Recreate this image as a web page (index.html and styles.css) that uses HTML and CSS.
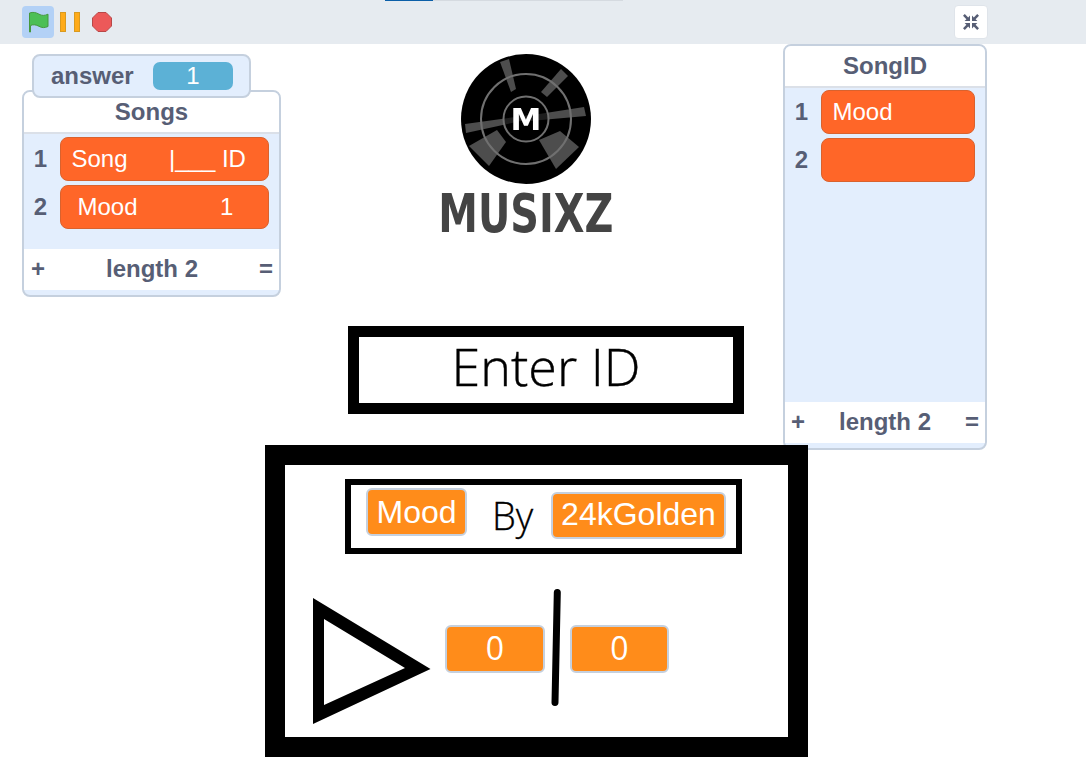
FILE: index.html
```html
<!DOCTYPE html>
<html lang="en">
<head>
<meta charset="utf-8">
<title>Musixz</title>
<link rel="stylesheet" href="styles.css">
</head>
<body>
<header class="toolbar">
  <div class="progress"><span class="progress-fill"></span></div>
  <div class="controls">
    <button class="flag-btn" aria-label="Go">
      <svg width="22" height="22" viewBox="0 0 22 22"><path d="M2.500 21V2C6 .8 9 1.400 12 3.200 15 4.800 17.500 4.800 21 3.200V15.500C17.500 17 15 17 12 15.300 9 13.600 6 13.300 3.500 14.500V21Z" fill="#4cbf56" stroke="#45993d" stroke-width="1"/></svg>
    </button>
    <span class="pause"><i></i><i></i></span>
    <svg class="stop" width="20" height="20" viewBox="0 0 20 20"><path d="M6 .5H14L19.500 6V14L14 19.500H6L.5 14V6Z" fill="#ec5959" stroke="#b84848"/></svg>
  </div>
  <button class="full-btn" aria-label="Exit full screen">
    <svg width="16" height="16" viewBox="0 0 16 16" fill="#575e75"><path d="M1.800 0 5.200 3.400 7 1.600V7H1.600L3.400 5.200 0 1.800Z"/><path d="M14.200 0 10.800 3.400 9 1.600V7H14.400L12.600 5.200 16 1.800Z"/><path d="M1.800 16 5.200 12.600 7 14.400V9H1.600L3.400 10.800 0 14.200Z"/><path d="M14.200 16 10.800 12.600 9 14.400V9H14.400L12.600 10.800 16 14.200Z"/></svg>
  </button>
</header>
<main class="stage">
  <section class="monitor list songs">
    <h2 class="list-title">Songs</h2>
    <ol class="list-body">
      <li class="row"><span class="idx">1</span><span class="cell"><span class="cell-a">Song</span><span class="cell-b">|___ ID</span></span></li>
      <li class="row"><span class="idx">2</span><span class="cell"><span class="cell-c">Mood</span><span class="cell-d">1</span></span></li>
    </ol>
    <div class="list-foot"><span>+</span><span class="len">length 2</span><span>=</span></div>
  </section>
  <section class="monitor answer"><span class="answer-label">answer</span><span class="answer-value">1</span></section>
  <section class="monitor list songid">
    <h2 class="list-title">SongID</h2>
    <ol class="list-body">
      <li class="row"><span class="idx">1</span><span class="cell">Mood</span></li>
      <li class="row"><span class="idx">2</span><span class="cell"></span></li>
    </ol>
    <div class="list-foot"><span>+</span><span class="len">length 2</span><span>=</span></div>
  </section>

  <div class="logo">
    <svg class="logo-disc" width="132" height="132" viewBox="0 0 132 132">
      <circle cx="66" cy="66" r="65" fill="#000"/>
      <g fill="#4d4d4d">
        <path d="M40 9 49 6 56 36 51 39Z"/>
        <path d="M101 16 108 23 87 44 81 39Z"/>
        <path d="M5 71 70 62 70 66 6 80Z"/>
        <path d="M60 64 124 54 126 63 70 68Z"/>
        <path d="M9 93 37 77 46 89 29 113Z"/>
        <path d="M79 87 100 78 119 94 96 116Z"/>
      </g>
      <circle cx="66" cy="66" r="45" fill="none" stroke="#707070" stroke-width="2"/>
      <circle cx="66" cy="66" r="22.500" fill="#000" fill-opacity=".6" stroke="#707070" stroke-width="2"/>
      <text class="logo-m" x="66" y="77">M</text>
    </svg>
    <span class="logo-word">MUSIXZ</span>
  </div>

  <div class="frame enter">Enter ID</div>

  <div class="player"></div>
  <div class="title-frame">
    <span class="var var-mood">Mood</span>
    <span class="by">By</span>
    <span class="var var-artist">24kGolden</span>
  </div>
  <svg class="play" width="118" height="126" viewBox="0 0 118 126"><path fill-rule="evenodd" d="M0 0 117.500 71 0 126ZM11 21V107L92 70Z" fill="#000"/></svg>
  <span class="var time time-a">0</span>
  <svg class="divider" width="10" height="118" viewBox="0 0 10 118"><path d="M6.300 3.500 4 113.500" stroke="#000" stroke-width="7" stroke-linecap="round"/></svg>
  <span class="var time time-b">0</span>
</main>
</body>
</html>
```
FILE: styles.css
```css
* { box-sizing: border-box; }
html, body { margin: 0; padding: 0; height: 100%; }
body {
  width: 1086px;
  height: 763px;
  overflow: hidden;
  background: #fff;
  font-family: "Liberation Sans", Arial, sans-serif;
  color: #575e75;
}
.toolbar {
  position: relative;
  height: 44px;
  background: #e6ebf0;
  display: flex;
  align-items: center;
  justify-content: space-between;
  padding: 0 98px 0 22px;
}
.progress {
  position: absolute;
  left: 385px;
  top: 0;
  width: 238px;
  height: 1px;
  background: #d5dae0;
}
.progress-fill { display: block; width: 48px; height: 100%; background: #0b5fa8; }
.controls { display: flex; align-items: center; }
.flag-btn {
  width: 32px;
  height: 32px;
  padding: 0;
  border: 0;
  border-radius: 4px;
  background: #b3d1f6;
  display: flex;
  align-items: center;
  justify-content: center;
}
.pause { display: flex; gap: 8px; margin-left: 6px; }
.pause i { display: block; width: 6px; height: 20px; background: #ffab19; border: 1px solid #d99a1f; }
.stop { margin-left: 12px; }
.full-btn {
  width: 34px;
  height: 34px;
  padding: 0;
  background: #fff;
  border: 1px solid #dfe4ea;
  border-radius: 4px;
  display: flex;
  align-items: center;
  justify-content: center;
}
.stage { position: relative; height: 719px; overflow: hidden; background: #fff; }
.monitor { position: absolute; border: 2px solid #c5d0de; background: #e3eefd; }
.list { display: flex; flex-direction: column; border-radius: 8px; overflow: hidden; }
.songs { left: 22px; top: 46px; width: 259px; height: 207px; }
.songid { left: 783px; top: 0; width: 204px; height: 406px; }
.list-title {
  margin: 0;
  height: 42px;
  flex: none;
  background: #fff;
  border-bottom: 2px solid #dbe0e8;
  font-size: 24px;
  font-weight: 700;
  line-height: 40px;
  text-align: center;
  color: #575e75;
}
.list-body { flex: 1; margin: 0; padding: 0; list-style: none; }
.songs .list-body { padding-top: 1px; }
.row { display: flex; align-items: center; height: 48px; }
.idx { width: 36px; flex: none; padding-right: 3px; text-align: center; font-size: 24px; font-weight: 700; }
.cell {
  flex: 1;
  height: 44px;
  margin-right: 10px;
  padding: 0 10.500px;
  border: 1.500px solid #d9622e;
  border-radius: 8px;
  background: #ff6628;
  color: #fff;
  font-size: 24px;
  line-height: 41px;
  white-space: pre;
  position: relative;
}
.songs .cell { line-height: 42px; }
.cell-b, .cell-d { position: absolute; top: 0; }
.cell-c { margin-left: 6px; }
.cell-b { left: 108px; }
.cell-d { left: 159px; }
.list-foot {
  flex: none;
  height: 41px;
  margin-bottom: 5px;
  background: #fff;
  padding: 0 6px 2px 7px;
  display: flex;
  align-items: center;
  justify-content: space-between;
  font-size: 24px;
  font-weight: 700;
}
.songid .list-foot { padding-left: 6px; }
.answer {
  left: 32px;
  top: 10px;
  width: 219px;
  height: 44px;
  border-radius: 8px;
  display: flex;
  align-items: center;
  padding: 0 16px 0 17px;
  justify-content: space-between;
}
.answer-label { font-size: 24px; font-weight: 700; }
.answer-value {
  width: 80px;
  height: 28px;
  border-radius: 7px;
  background: #5cb1d6;
  color: #fff;
  text-align: center;
  font-size: 24px;
  line-height: 28px;
}
.logo {
  position: absolute;
  left: 426px;
  top: 9px;
  width: 200px;
  display: flex;
  flex-direction: column;
  align-items: center;
}
.logo-disc { display: block; filter: blur(.4px); }
.logo-m { font: 900 31px "DejaVu Sans", sans-serif; fill: #fff; text-anchor: middle; }
.logo-word {
  margin-top: 5px;
  font: 700 53px/48px "DejaVu Sans Condensed", "DejaVu Sans", sans-serif;
  color: #444;
  transform: scaleX(.835);
  filter: blur(.6px);
}
.frame { position: absolute; border: 11px solid #000; background: #fff; }
.enter {
  left: 348px;
  top: 282px;
  width: 396px;
  height: 88px;
  text-align: center;
  font: 300 52px/57px "Open Sans", sans-serif;
  color: #000;
  -webkit-text-stroke: .4px #000;
}
.player {
  position: absolute;
  left: 265px;
  top: 401px;
  width: 543px;
  height: 312px;
  border: 20px solid #000;
}
.title-frame {
  position: absolute;
  left: 345px;
  top: 435px;
  width: 397px;
  height: 75px;
  border: 6px solid #000;
  background: #fff;
}
.var {
  position: absolute;
  border: 2px solid #c5d0de;
  border-radius: 6px;
  background: #ff8c1a;
  color: #fff;
  text-align: center;
  font-size: 32px;
}
.var-mood { left: 15px; top: 3px; width: 101px; height: 48px; line-height: 44px; }
.var-artist { left: 200px; top: 7px; width: 175px; height: 47px; line-height: 41px; }
.by {
  position: absolute;
  left: 141px;
  top: 5px;
  font: 300 38px/50px "Open Sans", sans-serif;
  color: #000;
  -webkit-text-stroke: .3px #000;
}
.play { position: absolute; left: 313px; top: 554px; }
.divider { position: absolute; left: 551px; top: 545px; }
.time { width: 100px; height: 48px; top: 581px; line-height: 42px; font-family: "Open Sans", sans-serif; font-size: 32px; }
.time-a { left: 445px; }
.time-b { left: 570px; width: 99px; }
```
